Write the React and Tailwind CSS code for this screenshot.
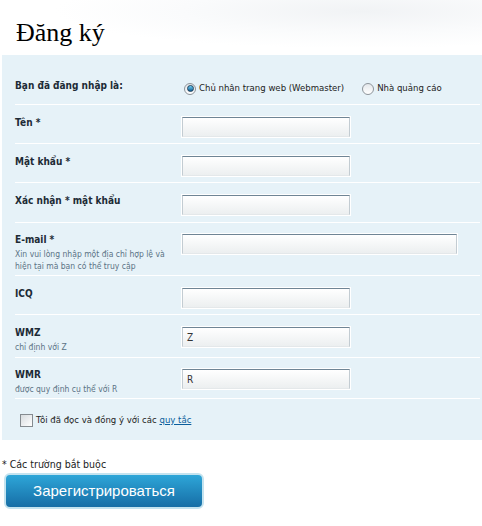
const font = "font-['DejaVu_Sans_Condensed','Liberation_Sans',sans-serif]"

const Field = ({ value = '', wide = false }) => (
  <div className={`${wide ? 'w-[277px]' : 'w-[170px]'} h-[22px] border border-white shrink-0`}>
    <div className="w-full h-full border border-[#c3ccd2] border-t-[#6f8595] border-b-[#e4e8ea] bg-gradient-to-b from-white to-[#eceff0] pl-[4px] text-[10px] leading-[19px] text-[#333]">
      {value}
    </div>
  </div>
)

const Row = ({ h, pt, label, note, children }) => (
  <div className={`flex ml-[13px] mr-[2px] border-b border-white ${h} ${pt}`}>
    <div className="w-[166px] shrink-0">
      <div className="text-[10px] font-bold text-[#1d2b36] leading-[14px]">{label}</div>
      {note && <div className="text-[8.5px] text-[#5b7385] leading-[12px] mt-[1px] pr-2">{note}</div>}
    </div>
    {children}
  </div>
)

const Radio = ({ checked, children }) => (
  <label className="flex items-center gap-[3px] text-[9.5px] text-[#222]">
    <span className="w-[12px] h-[12px] rounded-full border border-[#8d949a] bg-gradient-to-b from-[#e4e8eb] to-white flex items-center justify-center">
      {checked && <span className="w-[7px] h-[7px] rounded-full border border-[#1c3f5a] bg-gradient-to-b from-[#6fd0f5] to-[#0a5f95]" />}
    </span>
    {children}
  </label>
)

export default function App() {
  return (
    <div className={`w-[482px] h-[526px] bg-white overflow-hidden ${font}`}>
      <div className="h-[55px] pl-4 pt-[18px] bg-[radial-gradient(ellipse_at_75%_20%,#f1f3f5_0%,#fafbfc_35%,white_60%)]">
        <h1 className="font-['Liberation_Serif',serif] text-[26px] leading-[30px] text-black">Đăng ký</h1>
      </div>
      <div className="ml-[2px] bg-[#e6f2f8] h-[385px]">
        <div className="flex ml-[13px] mr-[2px] border-b border-white h-[50px] pt-[24px]">
          <div className="w-[169px] shrink-0 text-[10px] font-bold text-[#1d2b36] leading-[14px]">Bạn đã đăng nhập là:</div>
          <div className="flex gap-[18px] pt-[5px] h-[14px]">
            <Radio checked>Chủ nhân trang web (Webmaster)</Radio>
            <Radio>Nhà quảng cáo</Radio>
          </div>
        </div>
        <Row h="h-[39px]" pt="pt-[11px]" label="Tên *"><Field /></Row>
        <Row h="h-[39px]" pt="pt-[11px]" label="Mật khẩu *"><Field /></Row>
        <Row h="h-[40px]" pt="pt-[11px]" label="Xác nhận * mật khẩu"><Field /></Row>
        <Row h="h-[53px]" pt="pt-[10px]" label="E-mail *" note="Xin vui lòng nhập một địa chỉ hợp lệ và hiện tại mà bạn có thể truy cập"><Field wide /></Row>
        <Row h="h-[39px]" pt="pt-[11px]" label="ICQ"><Field /></Row>
        <Row h="h-[43px]" pt="pt-[11px]" label="WMZ" note="chỉ định với Z"><Field value="Z" /></Row>
        <Row h="h-[41px]" pt="pt-[10px]" label="WMR" note="được quy định cụ thể với R"><Field value="R" /></Row>
        <div className="flex items-center gap-[3px] ml-[18px] pt-[14px] text-[9.5px] text-[#222]">
          <span className="w-[13px] h-[13px] border border-[#858b90] bg-gradient-to-br from-[#d8dcdf] to-white" />
          <span>Tôi đã đọc và đồng ý với các <a href="#" className="text-[#0b5e9c] underline">quy tắc</a></span>
        </div>
      </div>
      <div className="pl-[2px] pt-[18px] text-[10.5px] text-[#222] leading-[13px]">* Các trường bắt buộc</div>
      <button className="ml-[4px] mt-[2px] w-[200px] h-[36px] rounded-[6px] border-2 border-[#c4e3ef] bg-gradient-to-b from-[#2ea6d8] to-[#176ea6] text-white text-[15px] font-['Liberation_Sans',sans-serif] leading-[30px]">
        Зарегистрироваться
      </button>
    </div>
  )
}
